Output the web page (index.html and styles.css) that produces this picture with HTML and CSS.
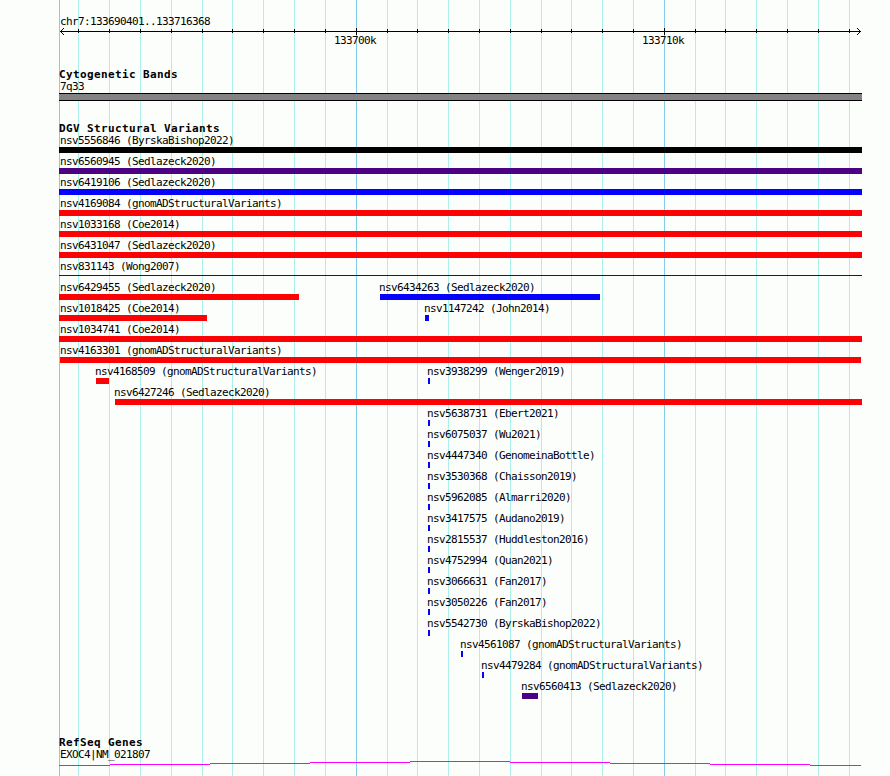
FILE: index.html
```html
<!DOCTYPE html>
<html lang="en">

<head>
    <meta charset="UTF-8">
    <meta name="viewport" content="width=device-width, initial-scale=1.0">
    <title>chr7:133690401..133716368</title>
    <link rel="stylesheet" href="styles.css">
</head>

<body>
    <div class="browser">
        <svg class="gridlines" id="gridlines" width="890" height="776" shape-rendering="crispEdges"></svg>

        <div class="ruler">
            <p class="label region">chr7:133690401..133716368</p>
            <svg class="axis" id="axis" width="890" height="7" shape-rendering="crispEdges"></svg>
            <div class="ticks">
                <span class="label">133700k</span>
                <span class="label">133710k</span>
            </div>
        </div>

        <section class="track cytobands">
            <h2>Cytogenetic Bands</h2>
            <p class="label">7q33</p>
            <div class="band"></div>
        </section>

        <section class="track variants">
            <h2>DGV Structural Variants</h2>
            <div id="variants"></div>
        </section>

        <section class="track genes">
            <h2>RefSeq Genes</h2>
            <p class="label">EXOC4|NM_021807</p>
            <svg class="gene" width="803" height="5" shape-rendering="crispEdges">
                <path d="M0 4h51v1H0zM51 3h100v1H51zM151 2h100v1H151zM251 1h100v1H251zM351 0h100v1H351zM451 1h100v1H451zM551 2h100v1H551zM651 3h100v1H651zM751 4h51v1H751z" />
            </svg>
        </section>
    </div>

    <script>
        const LEFT = 59;
        const minor = [78, 109, 140, 171, 202, 232, 263, 294, 325, 387, 417, 448, 479, 510, 541, 571, 602, 633, 695, 725, 756, 787, 818, 849];
        const major = [356, 664];

        // name, start x, end x, type
        const rows = [
            [['nsv5556846 (ByrskaBishop2022)', 59, 862, 'complex']],
            [['nsv6560945 (Sedlazeck2020)', 59, 862, 'inversion']],
            [['nsv6419106 (Sedlazeck2020)', 59, 862, 'gain']],
            [['nsv4169084 (gnomADStructuralVariants)', 59, 862, 'loss']],
            [['nsv1033168 (Coe2014)', 59, 862, 'loss']],
            [['nsv6431047 (Sedlazeck2020)', 59, 862, 'loss']],
            [['nsv831143 (Wong2007)', 59, 862, 'gain thin']],
            [['nsv6429455 (Sedlazeck2020)', 59, 299, 'loss'], ['nsv6434263 (Sedlazeck2020)', 380, 600, 'gain']],
            [['nsv1018425 (Coe2014)', 59, 207, 'loss'], ['nsv1147242 (John2014)', 425, 429, 'gain']],
            [['nsv1034741 (Coe2014)', 59, 862, 'loss']],
            [['nsv4163301 (gnomADStructuralVariants)', 60, 861, 'loss']],
            [['nsv4168509 (gnomADStructuralVariants)', 96, 109, 'loss'], ['nsv3938299 (Wenger2019)', 428, 430, 'gain']],
            [['nsv6427246 (Sedlazeck2020)', 115, 862, 'loss']],
            [['nsv5638731 (Ebert2021)', 428, 430, 'gain']],
            [['nsv6075037 (Wu2021)', 428, 430, 'gain']],
            [['nsv4447340 (GenomeinaBottle)', 428, 430, 'gain']],
            [['nsv3530368 (Chaisson2019)', 428, 430, 'gain']],
            [['nsv5962085 (Almarri2020)', 428, 430, 'gain']],
            [['nsv3417575 (Audano2019)', 428, 430, 'gain']],
            [['nsv2815537 (Huddleston2016)', 428, 430, 'gain']],
            [['nsv4752994 (Quan2021)', 428, 430, 'gain']],
            [['nsv3066631 (Fan2017)', 428, 430, 'gain']],
            [['nsv3050226 (Fan2017)', 428, 430, 'gain']],
            [['nsv5542730 (ByrskaBishop2022)', 428, 430, 'gain']],
            [['nsv4561087 (gnomADStructuralVariants)', 461, 463, 'gain']],
            [['nsv4479284 (gnomADStructuralVariants)', 482, 484, 'gain']],
            [['nsv6560413 (Sedlazeck2020)', 522, 538, 'inversion']]
        ];

        function rect(cls, x, y, w, h) {
            return `<rect class="${cls}" x="${x}" y="${y}" width="${w}" height="${h}" />`;
        }

        document.getElementById('gridlines').innerHTML =
            minor.map(x => rect('minor', x, 0, 1, 776)).join('') +
            [LEFT, ...major].map(x => rect('major', x, 0, 1, 776)).join('');

        document.getElementById('axis').innerHTML =
            rect('tick', 60, 3, 801, 1) +
            minor.map(x => rect('tick', x, 1, 1, 4)).join('') +
            major.map(x => rect('tick', x, 0, 1, 7)).join('') +
            [1, 2, 3].map(i =>
                rect('tick', 60 + i, 3 - i, 1, 1) + rect('tick', 60 + i, 3 + i, 1, 1) +
                rect('tick', 860 - i, 3 - i, 1, 1) + rect('tick', 860 - i, 3 + i, 1, 1)
            ).join('');

        document.getElementById('variants').innerHTML = rows.map(row =>
            '<div class="row">' + row.map(([name, start, end, type]) => `
                <div class="feature">
                    <p class="label" style="margin-left: ${Math.max(1, start - 1 - LEFT)}px">${name}</p>
                    <div class="bar ${type}" style="margin-left: ${start - LEFT}px; width: ${end - start}px"></div>
                </div>`).join('') + '</div>'
        ).join('');
    </script>
</body>
</html>
```

FILE: styles.css
```css
body {
    margin: 0;
    background-color: #fcfefc;
    color: #000;
    font-family: "DejaVu Sans Mono", monospace;
}

.browser {
    position: relative;
    width: 890px;
    height: 776px;
    overflow: hidden;
}

svg {
    display: block;
}

/* vertical lines run behind every track */
.gridlines {
    position: absolute;
    top: 0;
    left: 0;
    z-index: -1;
}

.minor {
    fill: #acf0ec;
}

.major {
    fill: #84ceec;
}

.label {
    margin: 0 0 0 1px;
    font-size: 11px;
    line-height: 13px;
    letter-spacing: -0.622px;
    white-space: pre;
}

.ruler {
    height: 52px;
    padding-top: 15px;
}

.region {
    margin-left: 60px;
}

.ticks {
    display: flex;
    gap: 265px;
    margin-top: -1px;
    padding-left: 333px;
}

.ticks .label {
    width: 42px;
}

.track {
    width: 803px;
    margin-left: 59px;
}

.track h2 {
    margin: 0;
    height: 13px;
    font-size: 11px;
    line-height: 15px;
    font-weight: bold;
    letter-spacing: 0.378px;
    white-space: pre;
}

.band {
    height: 6px;
    border-top: 1px solid #000;
    border-bottom: 1px solid #000;
    background-color: #848284;
}

.variants {
    margin-top: 20px;
}

.genes {
    margin-top: 34px;
}

.gene {
    fill: #fc02fc;
}

/* features sharing a row are stacked in the same cell */
.row {
    display: grid;
    height: 21px;
}

.feature {
    grid-area: 1 / 1;
}

.bar {
    height: 6px;
}

.complex {
    background-color: #000;
}

.inversion {
    background-color: #4c0284;
}

.gain {
    background-color: #0402fc;
}

.loss {
    background-color: #fc0204;
}

.thin {
    height: 1px;
    margin-top: 2px;
}
```
